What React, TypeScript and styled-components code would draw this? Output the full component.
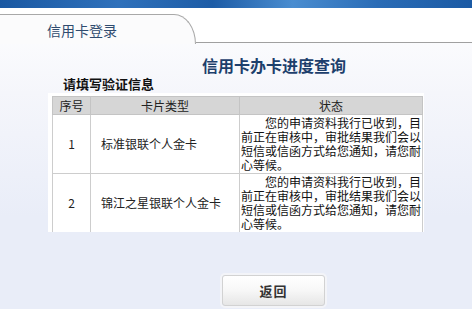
import styled, { createGlobalStyle } from "styled-components";

const GlobalStyle = createGlobalStyle`
  html, body {
    margin: 0;
    padding: 0;
    width: 472px;
    height: 309px;
    overflow: hidden;
    font-family: "Noto Sans CJK SC", "DejaVu Sans", sans-serif;
    font-size: 12px;
    color: #000;
  }
`;

const Page = styled.div`
  width: 472px;
  height: 309px;
  display: flex;
  flex-direction: column;
  background: linear-gradient(to bottom, #ffffff 0%, #f5f6fb 30%, #e9edf8 70%, #e9edf8 100%);
`;

const TopBand = styled.div`
  height: 8px;
  background: linear-gradient(90deg, #1a58a2 0%, #2f71bb 25%, #1d5ca6 45%, #4a8dd0 62%, #2a6cb6 80%, #1b5aa4 100%);
`;

const HeaderRow = styled.div`
  height: 35px;
  display: flex;
  align-items: flex-end;
  background: #fff;
`;

const Tab = styled.div`
  width: 196px;
  height: 30px;
  box-sizing: border-box;
  border-top: 1px solid #a8a8a8;
  border-right: 1px solid #a8a8a8;
  border-top-right-radius: 22px 30px;
  background: #fbfbfc;
  display: flex;
  align-items: center;
  padding-left: 47px;
  font-size: 14px;
  color: #2f4b6f;
  margin-bottom: -1px;
`;

const TabFiller = styled.div`
  flex: 1;
  height: 30px;
  border-bottom: 1px solid #a0a0a0;
`;

const Content = styled.div`
  flex: 1;
  display: flex;
  flex-direction: column;
  padding-top: 12px;
`;

const Title = styled.div`
  padding-left: 76px;
  text-align: center;
  font-size: 16px;
  line-height: 20px;
  font-weight: bold;
  color: #1d3f6c;
`;

const Label = styled.div`
  margin-top: 2px;
  padding-left: 63px;
  font-size: 13px;
  line-height: 14px;
  font-weight: bold;
  color: #111;
`;

const Panel = styled.div`
  margin: 2px 0 0 48px;
  width: 376px;
  height: 139px;
  box-sizing: border-box;
  padding: 3px 5px 0 4px;
  background: #fff;
  overflow: hidden;
`;

const Table = styled.table`
  width: 367px;
  border-collapse: collapse;
  table-layout: fixed;
`;

const Head = styled.th<{ $w: number }>`
  width: ${(p) => p.$w}px;
  height: 17px;
  padding: 0;
  background: #d6d6d6;
  border: 1px solid #c4c4c4;
  font-weight: normal;
  font-size: 12px;
  line-height: 16px;
  color: #222;
  text-align: center;
`;

const Cell = styled.td<{ $align?: string }>`
  padding: 1px 0 1px ${(p) => (p.$align === "left" ? "10px" : "0")};
  border: 1px solid #cdcdcd;
  text-align: ${(p) => p.$align || "center"};
  vertical-align: middle;
  font-size: 12px;
  line-height: 14px;
  color: #222;
`;

const StatusCell = styled.td`
  padding: 1px 1px 1px 1px;
  border: 1px solid #cdcdcd;
  text-indent: 2em;
  font-size: 12px;
  line-height: 14px;
  color: #111;
  word-break: break-all;
`;

const Footer = styled.div`
  flex: 1;
  display: flex;
  align-items: flex-start;
  padding: 43px 0 0 222px;
`;

const BackButton = styled.button`
  width: 103px;
  height: 31px;
  border: 1px solid #d2d2d2;
  border-radius: 3px;
  background: linear-gradient(to bottom, #ffffff 0%, #f7f7f7 50%, #e6e6e6 100%);
  box-shadow: 0 0 0 2px #f3f4f8;
  font-family: "Noto Sans CJK SC", sans-serif;
  font-size: 13px;
  font-weight: bold;
  color: #333;
  letter-spacing: 1px;
  cursor: pointer;
`;

const rows = [
  { no: 1, card: "标准银联个人金卡" },
  { no: 2, card: "锦江之星银联个人金卡" },
];

const statusText =
  "您的申请资料我行已收到，目前正在审核中，审批结果我们会以短信或信函方式给您通知，请您耐心等候。";

const App = () => {
  return (
    <Page>
      <GlobalStyle />
      <TopBand />
      <HeaderRow>
        <Tab>信用卡登录</Tab>
        <TabFiller />
      </HeaderRow>
      <Content>
        <Title>信用卡办卡进度查询</Title>
        <Label>请填写验证信息</Label>
        <Panel>
          <Table>
            <thead>
              <tr>
                <Head $w={37}>序号</Head>
                <Head $w={148}>卡片类型</Head>
                <Head $w={182}>状态</Head>
              </tr>
            </thead>
            <tbody>
              {rows.map((r) => (
                <tr key={r.no}>
                  <Cell>{r.no}</Cell>
                  <Cell $align="left">{r.card}</Cell>
                  <StatusCell>{statusText}</StatusCell>
                </tr>
              ))}
            </tbody>
          </Table>
        </Panel>
        <Footer>
          <BackButton>返回</BackButton>
        </Footer>
      </Content>
    </Page>
  );
};

export default App;
